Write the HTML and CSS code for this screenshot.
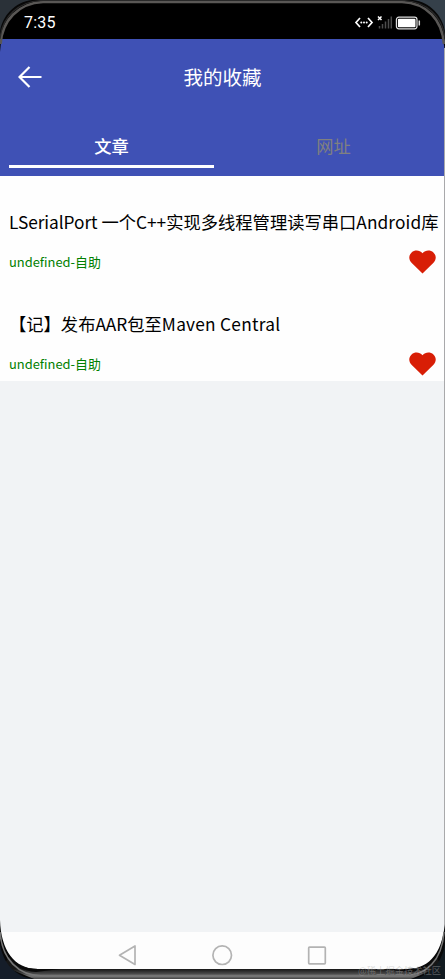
FILE: index.html
```html
<!DOCTYPE html>
<html lang="zh-CN">
<head>
<meta charset="utf-8">
<title>我的收藏</title>
<link rel="stylesheet" href="styles.css">
</head>
<body>
<div class="phone">
  <div class="status">
    <span class="time">7:35</span>
    <svg class="status-icons" width="68" height="18" viewBox="0 0 68 18">
      <g fill="none" stroke="#fff" stroke-width="1.7"><path d="M6 5L2 9.500L6 14M14 5L18 9.500L14 14"/></g>
      <g fill="#fff"><circle cx="7.300" cy="9.500" r="1"/><circle cx="10" cy="9.500" r="1"/><circle cx="12.700" cy="9.500" r="1"/></g>
      <path d="M24 3.500L27.500 7M27.500 3.500L24 7" stroke="#fff" stroke-width="1.500"/>
      <path d="M25.500 13v2.500M28.500 11v4.500M31.500 8.500v7M34.500 6v9.500M37.300 3.500v12" stroke="#4c4c4c" stroke-width="1.500"/>
      <rect x="42.400" y="4.200" width="20.600" height="11.600" rx="2.500" fill="none" stroke="#ddd" stroke-width="1.200"/>
      <rect x="43.900" y="5.700" width="17.600" height="8.600" rx="1" fill="#fff"/>
      <path d="M65.300 7.500v5" stroke="#ddd" stroke-width="1.500"/>
    </svg>
  </div>
  <header class="header">
    <svg class="back" width="24" height="22" viewBox="0 0 24 22"><path d="M11.500 1L1.500 11L11.500 21M1.500 11H23.500" fill="none" stroke="#fff" stroke-width="2.200"/></svg>
    <h1 class="title">我的收藏</h1>
  </header>
  <nav class="tabs">
    <div class="tab active">文章</div>
    <div class="tab">网址</div>
  </nav>
  <main class="list">
    <article class="item">
      <h2 class="name"><span class="port">LSerialPort</span> 一个C++实现多线程管理读写串口<span class="platform">Android</span>库</h2>
      <div class="meta"><span>undefined-自助</span>
        <svg class="heart" width="27" height="24" viewBox="0 0 27 24"><path d="M13.500 3.200C10.500-.3 5.600-.2 2.600 2.400C-.6 5.500-.4 9.800 2.500 12.700L13.500 23.500L24.500 12.700C27.400 9.800 27.600 5.500 24.400 2.400C21.400-.2 16.500-.3 13.500 3.200Z" fill="#d81e06"/></svg>
      </div>
    </article>
    <article class="item">
      <h2 class="name">【记】发布AAR包至<span class="maven">Maven Central</span></h2>
      <div class="meta"><span>undefined-自助</span>
        <svg class="heart" width="27" height="24" viewBox="0 0 27 24"><path d="M13.500 3.200C10.500-.3 5.600-.2 2.600 2.400C-.6 5.500-.4 9.800 2.500 12.700L13.500 23.500L24.500 12.700C27.400 9.800 27.600 5.500 24.400 2.400C21.400-.2 16.500-.3 13.500 3.200Z" fill="#d81e06"/></svg>
      </div>
    </article>
  </main>
  <footer class="nav">
    <svg width="20" height="22" viewBox="0 0 20 22"><path d="M18 2V20.500L2.500 11.200Z"/></svg>
    <svg width="22" height="22" viewBox="0 0 22 22"><circle cx="11.200" cy="11.200" r="9.300"/></svg>
    <svg width="20" height="22" viewBox="0 0 20 22"><rect x="1.700" y="3.200" width="16.600" height="16.600" rx=".8"/></svg>
  </footer>
  <svg class="frame" width="445" height="979" viewBox="0 0 445 979">
    <defs>
      <linearGradient id="base" x1="0" y1="969" x2="0" y2="979" gradientUnits="userSpaceOnUse">
        <stop offset="0" stop-color="#161616"/><stop offset=".45" stop-color="#474747"/><stop offset=".7" stop-color="#777"/><stop offset="1" stop-color="#444"/>
      </linearGradient>
    </defs>
    <path d="M0 0H38C18 1 1 20 1 42L0 52Z" fill="#080808"/>
    <path d="M407 0C426 1 443.500 20 443.500 42L445 52V0Z" fill="#080808"/>
    <path d="M0 920C1 950 14 969 38 969H407C431 969 443.500 950 445 920V979H0Z" fill="#080808"/>
    <path d="M38 969H407C422 969 430 964 436 957L442 966L411 979H34L3 966L9 957C15 964 23 969 38 969Z" fill="url(#base)"/>
    <path d="M9 955C14 965 24 969 38 969H60L36 972C23 971 14 966 9 955ZM436 955C431 965 421 969 407 969H385L409 972C422 971 431 966 436 955Z" fill="#090909"/>
    <path d="M.5 44C2 21 18 3 43 2H402C427 3 442 20 444 44" fill="none" stroke="#595755" stroke-width="2.600"/>
    <path d="M0 39C2 17 18 1 43 .5H402C427 1 443 17 445 39" fill="none" stroke="#292929" stroke-width="1.200"/>
    <path d="M0 0H32C15 2 2 16 0 32Z" fill="#2a3138"/>
    <path d="M445 0H413C430 2 443 16 445 32Z" fill="#35404a"/>
    <path d="M444.500 48V924" stroke="#a9a9ab"/>
    <path d="M0 932C2 959 18 976 43 976H402C427 976 442 960 444 932" fill="none" stroke="#777" stroke-width="1.500"/>
    <path d="M0 944C3 963 15 977 34 979H0Z" fill="#151d29"/>
    <path d="M445 944C442 963 430 977 411 979H445Z" fill="#111a20"/>
  </svg>
  <span class="watermark">@稀土掘金技术社区</span>
</div>
</body>
</html>
```
FILE: styles.css
```css
* { box-sizing: border-box; }
body { margin: 0; font-family: "Noto Sans CJK SC", sans-serif; }
.phone { position: relative; width: 445px; height: 979px; overflow: hidden; display: flex; flex-direction: column; background: #f1f3f5; }
.status { height: 39px; background: #000; color: #fff; display: flex; justify-content: space-between; align-items: flex-start; padding: 13px 23px 0 24px; }
.time { font: 400 16px/20px Roboto, sans-serif; letter-spacing: .2px; }
.header { height: 76px; background: #3f51b5; display: grid; grid-template-columns: 24px 1fr 24px; align-items: center; padding: 0 18px; color: #fff; }
.title { margin: 0; text-align: center; font-size: 19.500px; line-height: 28px; font-weight: 400; }
.tabs { height: 61px; background: #3f51b5; display: grid; grid-template-columns: 205px 205px; column-gap: 17px; padding: 12px 9px 8px; }
.tab { color: #808080; font-size: 17.300px; line-height: 38px; text-align: center; }
.active { color: #fff; font-weight: 500; border-bottom: 3px solid #fff; }
.list { background: #fefefe; height: 205px; }
.item { height: 102px; padding: 33px 9px 0; }
.name { margin: 0; font-size: 17.300px; line-height: 26px; font-weight: 400; color: #000; white-space: nowrap; }
.port { letter-spacing: -.05px; }
.platform { letter-spacing: .1px; }
.maven { letter-spacing: .25px; }
.meta { display: flex; justify-content: space-between; align-items: flex-start; margin-top: 14px; height: 26px; font-size: 12.900px; line-height: 25px; color: #008000; }
.heart { margin: 1px .5px 0 0; }
.nav { height: 47px; margin-top: auto; background: #fdfdfd; display: flex; justify-content: center; gap: 74px; padding: 12px 2px 0 0; fill: none; stroke: #b3b3b3; stroke-width: 1.700; stroke-linejoin: round; }
.frame { position: absolute; inset: 0; }
.watermark { position: absolute; left: 358px; top: 963px; font-size: 9.300px; line-height: 14px; color: rgba(170, 170, 170, .45); white-space: nowrap; }
```
